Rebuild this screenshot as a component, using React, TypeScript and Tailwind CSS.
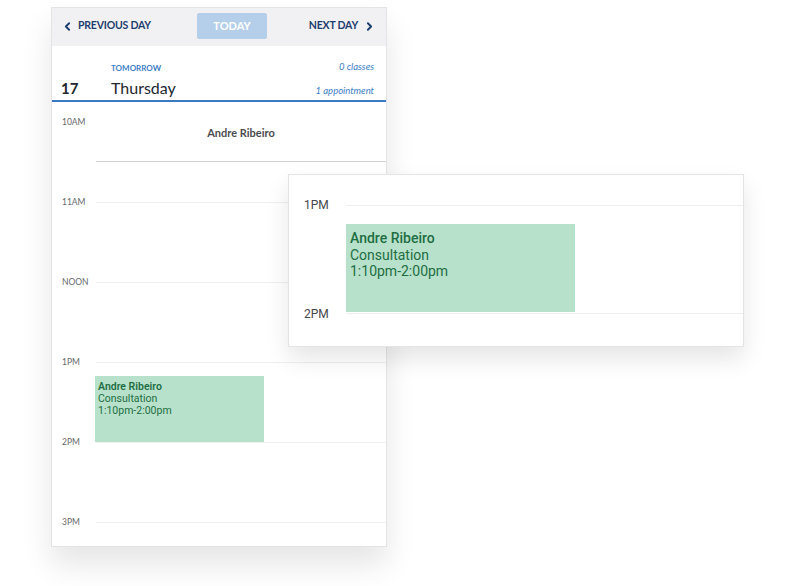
import { ChevronLeft, ChevronRight } from "lucide-react";

const HOURS = ["11AM", "NOON", "1PM", "2PM"];

function EventBlock({ big }: { big?: boolean }) {
  if (big) {
    return (
      <div className="mt-[18px] h-[88px] w-[229px] bg-[#b7e1cb] pl-[4px] pt-[6px] text-[14px] leading-[16.5px] text-[#1f6e43] font-['Roboto',sans-serif]">
        <p className="font-medium">Andre Ribeiro</p>
        <p>Consultation</p>
        <p>1:10pm-2:00pm</p>
      </div>
    );
  }
  return (
    <div className="-ml-px mt-[13px] h-[66px] w-[169px] bg-[#b7e1cb] pl-[3px] pt-[5px] text-[10.5px] leading-[12px] text-[#1f6e43] font-['Roboto',sans-serif]">
      <p className="font-semibold">Andre Ribeiro</p>
      <p>Consultation</p>
      <p>1:10pm-2:00pm</p>
    </div>
  );
}

function HourRow({ label, children, last }: { label: string; children?: React.ReactNode; last?: boolean }) {
  return (
    <div className={`flex ${last ? "h-[24px]" : "h-[80px]"}`}>
      <span className="-mt-[5px] w-[44px] shrink-0 pl-[10px] text-[8.5px] leading-[10px] text-[#65676b]">{label}</span>
      <div className="flex-1 border-t border-[#efefef]">{children}</div>
    </div>
  );
}

export default function App() {
  return (
    <div className="relative h-[586px] w-[800px] overflow-hidden bg-white font-['Lato',sans-serif]">
      <div className="ml-[51px] mt-[7px] w-[336px] border border-[#e4e4e6] bg-white shadow-[0_18px_28px_rgba(0,0,0,0.10)]">
        {/* day navigation */}
        <div className="flex h-[38px] items-center bg-[#f1f1f3] pb-[2px] pl-[9px] pr-[10px]">
          <button className="flex items-center gap-[4px] text-[10.5px] font-bold tracking-[-0.2px] text-[#1e3e6d]">
            <ChevronLeft className="h-[13px] w-[13px]" strokeWidth={3.5} />
            PREVIOUS DAY
          </button>
          <div className="ml-[46px] flex h-[26px] w-[70px] items-center justify-center rounded-[2px] bg-[#b5cfea] text-[11px] font-bold text-white">
            TODAY
          </div>
          <button className="ml-auto flex items-center gap-[5px] text-[10.5px] font-bold tracking-[-0.2px] text-[#1e3e6d]">
            NEXT DAY
            <ChevronRight className="h-[13px] w-[13px]" strokeWidth={3.5} />
          </button>
        </div>

        {/* day header */}
        <div className="flex h-[56px] items-end border-b-2 border-[#3d79c0] pb-[2px] pl-[9px] pr-[12px]">
          <span className="w-[50px] text-[15px] font-bold leading-[20px] text-[#23272e]">17</span>
          <div className="flex-1">
            <p className="text-[8px] font-bold leading-[10px] text-[#3c7dc6]">TOMORROW</p>
            <p className="mt-[5px] text-[16px] leading-[20px] text-[#23272e]">Thursday</p>
          </div>
          <div className="text-right text-[9.5px] italic leading-[12px] text-[#3c7dc6]">
            <p>0 classes</p>
            <p className="mb-[1px] mt-[12px]">1 appointment</p>
          </div>
        </div>

        {/* time grid */}
        <div className="pt-[20px]">
          <HourRow label="10AM">
            <div className="-mt-px h-[40px] border-b border-[#d3d3d5] bg-white pt-[3px] text-center text-[11px] font-bold text-[#4a4c50]">
              Andre Ribeiro
            </div>
          </HourRow>
          {HOURS.map((h) => (
            <HourRow key={h} label={h}>
              {h === "1PM" && <EventBlock />}
            </HourRow>
          ))}
          <HourRow label="3PM" last />
        </div>
      </div>

      {/* zoomed detail */}
      <div className="absolute left-[288px] top-[174px] h-[173px] w-[456px] border border-[#e4e4e6] bg-white pt-[30px] shadow-[0_12px_22px_rgba(0,0,0,0.10)]">
        <div className="flex h-[108px] font-['Roboto',sans-serif]">
          <span className="-mt-[8px] w-[57px] shrink-0 pl-[15px] text-[12px] leading-[16px] text-[#45474b]">1PM</span>
          <div className="flex-1 border-t border-[#eeeeee]">
            <EventBlock big />
          </div>
        </div>
        <div className="flex font-['Roboto',sans-serif]">
          <span className="-mt-[7px] w-[57px] shrink-0 pl-[15px] text-[12px] leading-[16px] text-[#45474b]">2PM</span>
          <div className="flex-1 border-t border-[#eeeeee]" />
        </div>
      </div>
    </div>
  );
}
